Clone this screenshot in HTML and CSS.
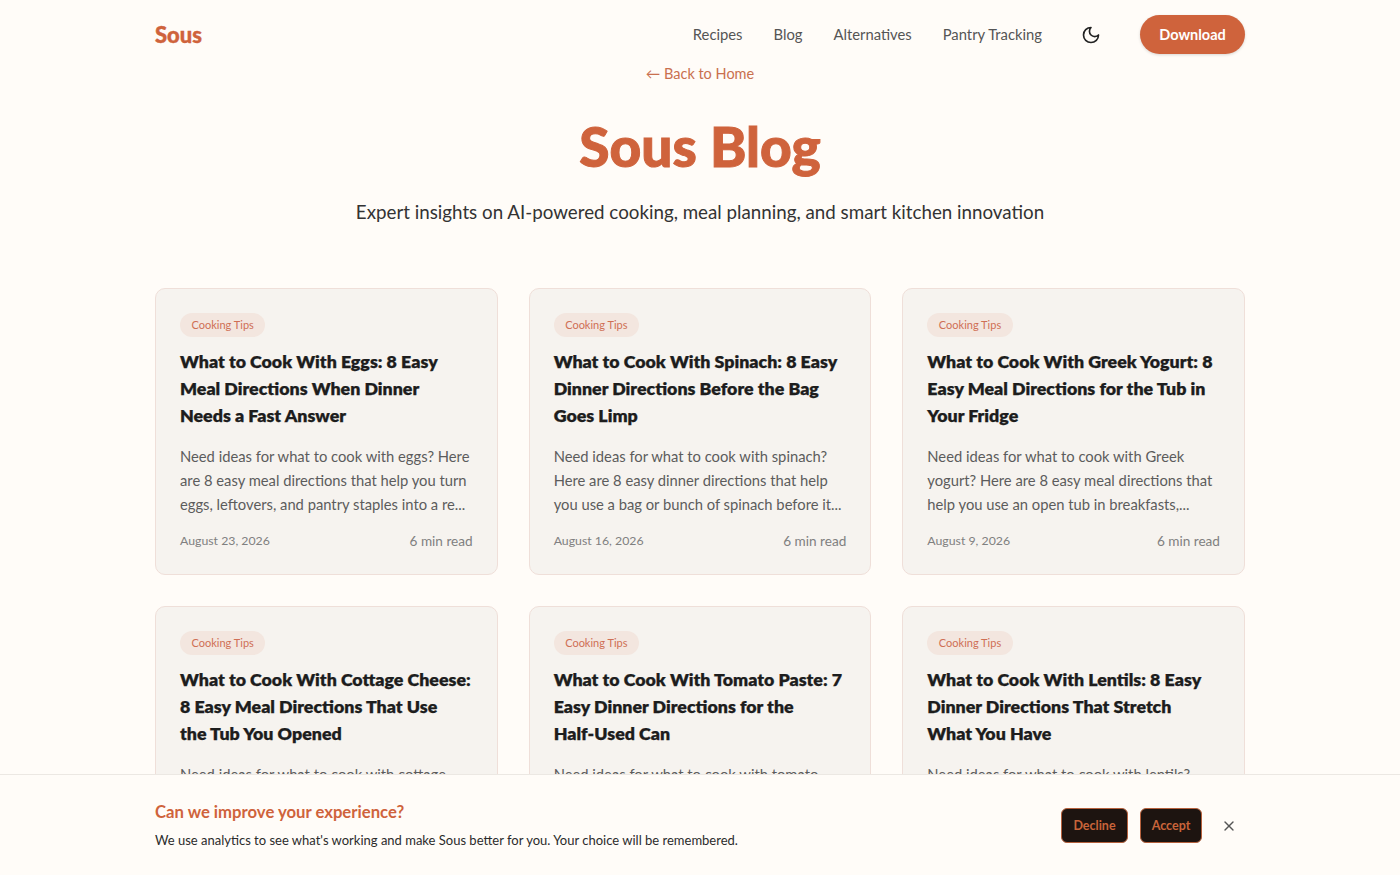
FILE: index.html
```html
<!DOCTYPE html>
<html lang="en">
  <head>
    <meta charset="UTF-8" />
    <meta name="viewport" content="width=device-width, initial-scale=1.0" />
    <title>Sous Blog</title>
    <link rel="stylesheet" href="styles.css">
  </head>
  <body>
    <header class="site-header">
      <a class="logo" href="#">Sous</a>
      <nav class="site-nav">
        <a href="#">Recipes</a>
        <a href="#">Blog</a>
        <a href="#">Alternatives</a>
        <a href="#">Pantry Tracking</a>
      </nav>
      <button class="theme-toggle" type="button" aria-label="Toggle theme">
        <svg width="20" height="20" viewBox="0 0 24 24" fill="none" stroke="currentColor" stroke-width="2" stroke-linecap="round" stroke-linejoin="round"><path d="M12 3a6 6 0 0 0 9 9 9 9 0 1 1-9-9Z" /></svg>
      </button>
      <a class="download" href="#">Download</a>
    </header>

    <main class="page">
      <a class="back-link" href="#">← Back to Home</a>
      <h1 class="page-title">Sous Blog</h1>
      <p class="page-sub">Expert insights on AI-powered cooking, meal planning, and smart kitchen innovation</p>

      <div class="post-grid">
        <article class="post-card">
          <span class="tag">Cooking Tips</span>
          <h2>What to Cook With Eggs: 8 Easy<br>Meal Directions When Dinner<br>Needs a Fast Answer</h2>
          <p class="excerpt">Need ideas for what to cook with eggs? Here<br>are 8 easy meal directions that help you turn<br>eggs, leftovers, and pantry staples into a re...</p>
          <div class="meta"><span class="date">August 23, 2026</span><span class="read">6 min read</span></div>
        </article>
        <article class="post-card">
          <span class="tag">Cooking Tips</span>
          <h2>What to Cook With Spinach: 8 Easy<br>Dinner Directions Before the Bag<br>Goes Limp</h2>
          <p class="excerpt">Need ideas for what to cook with spinach?<br>Here are 8 easy dinner directions that help<br>you use a bag or bunch of spinach before it...</p>
          <div class="meta"><span class="date">August 16, 2026</span><span class="read">6 min read</span></div>
        </article>
        <article class="post-card">
          <span class="tag">Cooking Tips</span>
          <h2>What to Cook With Greek Yogurt: 8<br>Easy Meal Directions for the Tub in<br>Your Fridge</h2>
          <p class="excerpt">Need ideas for what to cook with Greek<br>yogurt? Here are 8 easy meal directions that<br>help you use an open tub in breakfasts,...</p>
          <div class="meta"><span class="date">August 9, 2026</span><span class="read">6 min read</span></div>
        </article>
        <article class="post-card">
          <span class="tag">Cooking Tips</span>
          <h2>What to Cook With Cottage Cheese:<br>8 Easy Meal Directions That Use<br>the Tub You Opened</h2>
          <p class="excerpt">Need ideas for what to cook with cottage<br>cheese? Here are 8 easy meal directions that<br>use the tub you opened this week...</p>
          <div class="meta"><span class="date">August 2, 2026</span><span class="read">6 min read</span></div>
        </article>
        <article class="post-card">
          <span class="tag">Cooking Tips</span>
          <h2>What to Cook With Tomato Paste: 7<br>Easy Dinner Directions for the<br>Half-Used Can</h2>
          <p class="excerpt">Need ideas for what to cook with tomato<br>paste? Here are 7 easy dinner directions for<br>the half-used can in your fridge...</p>
          <div class="meta"><span class="date">July 26, 2026</span><span class="read">6 min read</span></div>
        </article>
        <article class="post-card">
          <span class="tag">Cooking Tips</span>
          <h2>What to Cook With Lentils: 8 Easy<br>Dinner Directions That Stretch<br>What You Have</h2>
          <p class="excerpt">Need ideas for what to cook with lentils?<br>Here are 8 easy dinner directions that stretch<br>what you have into a full meal...</p>
          <div class="meta"><span class="date">July 19, 2026</span><span class="read">6 min read</span></div>
        </article>
      </div>
    </main>

    <div class="cookie-bar">
      <div class="cookie-text">
        <h3>Can we improve your experience?</h3>
        <p>We use analytics to see what's working and make Sous better for you. Your choice will be remembered.</p>
      </div>
      <div class="cookie-actions">
        <button type="button" class="cookie-btn decline">Decline</button>
        <button type="button" class="cookie-btn">Accept</button>
        <button type="button" class="cookie-close" aria-label="Close">
          <svg width="16" height="16" viewBox="0 0 24 24" fill="none" stroke="currentColor" stroke-width="2" stroke-linecap="round" stroke-linejoin="round"><path d="M18 6 6 18" /><path d="m6 6 12 12" /></svg>
        </button>
      </div>
    </div>
  </body>
</html>
```

FILE: styles.css
```css
body {
  margin: 0;
  background-color: #fffcf8;
  color: #2b2b2b;
  font-family: "Lato", "Noto Sans", sans-serif;
}

a {
  text-decoration: none;
  color: inherit;
}

.site-header {
  width: 1090px;
  height: 70px;
  margin: 0 auto;
  display: flex;
  align-items: center;
}

.logo {
  margin-right: auto;
  margin-top: -2px;
  font-size: 22px;
  font-weight: 900;
  color: #cf633c;
  -webkit-text-stroke: 0.4px #cf633c;
}

.site-nav {
  display: flex;
  gap: 31px;
  font-size: 14.8px;
  margin-top: -3px;
  color: #555;
}

.theme-toggle {
  margin-left: 39px;
  margin-right: 39px;
  padding: 0;
  width: 20px;
  height: 20px;
  border: 0;
  background: none;
  color: #222;
}

.download {
  width: 105px;
  height: 39px;
  line-height: 39px;
  margin-top: -1px;
  text-align: center;
  border-radius: 20px;
  background-color: #cf633c;
  color: #fff;
  font-size: 14.5px;
  font-weight: 700;
  box-shadow: 0 1px 3px rgba(0, 0, 0, 0.15);
}

.page {
  width: 1090px;
  margin: 0 auto;
  text-align: center;
}

.back-link {
  display: block;
  font-size: 14.5px;
  line-height: 20px;
  margin-top: -6px;
  color: #c9704f;
}

.page-title {
  margin: 27px 0 0;
  font-size: 55px;
  line-height: 70px;
  font-weight: 900;
  color: #cf633c;
  -webkit-text-stroke: 1px #cf633c;
}

.page-sub {
  margin: 18px 0 0;
  font-size: 18.75px;
  line-height: 26px;
  color: #333;
}

.post-grid {
  margin-top: 63px;
  display: grid;
  grid-template-columns: repeat(3, minmax(0, 1fr));
  gap: 31px;
  text-align: left;
}

.post-card {
  padding: 24px;
  border: 1px solid #efdfd9;
  border-radius: 10px;
  background-color: #f6f3ef;
  white-space: nowrap;
}

.tag {
  display: inline-block;
  padding: 0 11.5px;
  height: 24px;
  line-height: 24px;
  border-radius: 12px;
  background-color: #f3e6df;
  color: #cf6f55;
  font-size: 11px;
}

.post-card h2 {
  margin: 11px 0 0;
  font-size: 17.8px;
  line-height: 27px;
  font-weight: 800;
  color: #1d1d1d;
  -webkit-text-stroke: 0.25px #1d1d1d;
}

.excerpt {
  margin: 15px 0 0;
  font-size: 14.75px;
  line-height: 24px;
  color: #5c5c5c;
}

.meta {
  margin-top: 16px;
  display: flex;
  justify-content: space-between;
  line-height: 18px;
  color: #808080;
}

.date {
  font-size: 12.3px;
}

.read {
  font-size: 13.6px;
}

.cookie-bar {
  position: fixed;
  left: 0;
  right: 0;
  bottom: 0;
  height: 101px;
  box-sizing: border-box;
  padding: 0 155px;
  display: flex;
  align-items: center;
  justify-content: space-between;
  border-top: 1px solid #ece8e3;
  background-color: #fffcf8;
}

.cookie-text h3 {
  margin: 0;
  font-size: 16.7px;
  line-height: 22px;
  font-weight: 700;
  color: #cf633c;
}

.cookie-text p {
  margin: 8px 0 0;
  font-size: 13px;
  line-height: 18px;
  color: #2b2b2b;
}

.cookie-actions {
  display: flex;
  align-items: center;
}

.cookie-btn {
  height: 35px;
  width: 62px;
  margin-right: 19px;
  padding: 1px 0 0;
  border: 1px solid #b5603c;
  border-radius: 6px;
  background-color: #1d1410;
  color: #c9643a;
  font-family: inherit;
  font-size: 12.5px;
  font-weight: 700;
}

.decline {
  width: 67px;
  margin-right: 12px;
}

.cookie-close {
  margin-top: 1px;
  margin-right: 8px;
  padding: 0;
  width: 16px;
  height: 16px;
  border: 0;
  background: none;
  color: #555;
}
```
